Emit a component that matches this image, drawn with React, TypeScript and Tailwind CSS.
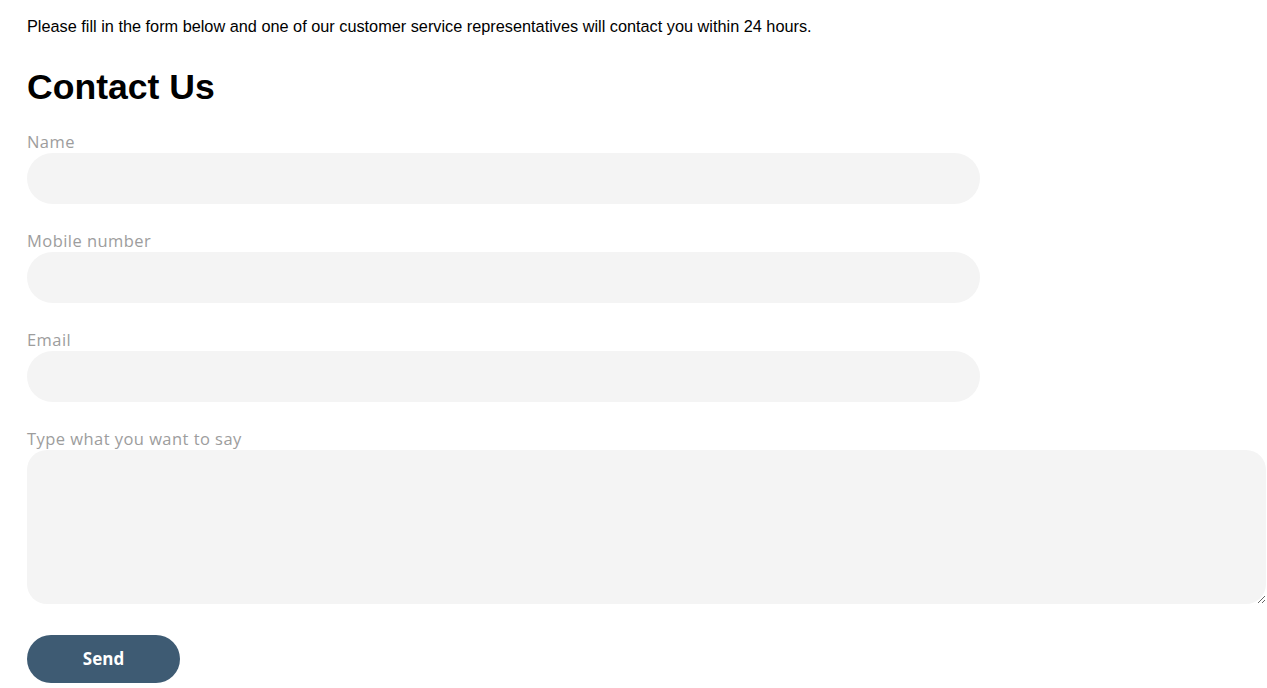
export default function App() {
  const fields = ["Name", "Mobile number", "Email"];

  return (
    <div className="min-h-screen bg-white pl-[27px] pt-[15px] font-['Liberation_Sans',Arial,sans-serif]">
      <p className="text-[16.3px] leading-[22px] text-black">
        Please fill in the form below and one of our customer service representatives will contact you within 24 hours.
      </p>
      <h1 className="mt-[29px] text-[35.6px] leading-[42px] font-bold text-black">Contact Us</h1>

      <form className="mt-[21px]" onSubmit={(e) => e.preventDefault()}>
        {fields.map((f) => (
          <div key={f} className="mb-[24px]">
            <label className="block pt-[3px] mb-[1px] text-[16.5px] leading-[20px] text-[#9d9d9d] font-['Open_Sans',sans-serif] tracking-[0.45px]">
              {f}
            </label>
            <input className="block w-[953px] h-[51px] rounded-[26px] bg-[#f4f4f4] outline-none px-5" />
          </div>
        ))}
        <div>
          <label className="block pt-[3px] mb-[1px] text-[16.5px] leading-[20px] text-[#9d9d9d] font-['Open_Sans',sans-serif] tracking-[0.45px]">
            Type what you want to say
          </label>
          <textarea className="block w-[1239px] h-[154px] rounded-[20px] bg-[#f4f4f4] outline-none p-4" />
        </div>
        <button
          type="submit"
          className="mt-[31px] w-[153px] h-[48px] rounded-full bg-[#3e5b73] text-white text-[17px] font-bold font-['Open_Sans',sans-serif]"
        >
          Send
        </button>
      </form>
    </div>
  );
}
